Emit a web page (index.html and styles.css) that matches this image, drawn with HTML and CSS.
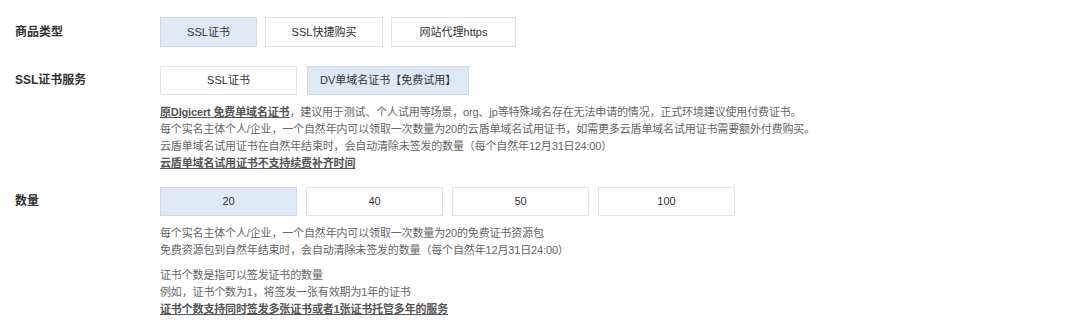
FILE: index.html
```html
<!DOCTYPE html>
<html lang="zh-CN">
<head>
<meta charset="utf-8">
<title>SSL证书</title>
<link rel="stylesheet" href="styles.css">
</head>
<body>
<div class="page">
  <div class="row row-type">
    <div class="label label-30">商品类型</div>
    <div class="content">
      <div class="opts">
        <div class="opt opt-30 w-ssl active">SSL证书</div>
        <div class="opt opt-30 w-quick">SSL快捷购买</div>
        <div class="opt opt-30 w-proxy">网站代理https</div>
      </div>
    </div>
  </div>

  <div class="row row-service">
    <div class="label">SSL证书服务</div>
    <div class="content">
      <div class="opts opts-service">
        <div class="opt opt-wide">SSL证书</div>
        <div class="opt opt-wide active">DV单域名证书【免费试用】</div>
      </div>
      <div class="desc">
        <p><span class="strong">原DIgicert 免费单域名证书</span>，建议用于测试、个人试用等场景，org、jp等特殊域名存在无法申请的情况，正式环境建议使用付费证书。<br>每个实名主体个人/企业，一个自然年内可以领取一次数量为20的云盾单域名试用证书，如需更多云盾单域名试用证书需要额外付费购买。<br>云盾单域名试用证书在自然年结束时，会自动清除未签发的数量（每个自然年12月31日24:00）<br><span class="strong">云盾单域名试用证书不支持续费补齐时间</span></p>
      </div>
    </div>
  </div>

  <div class="row row-count">
    <div class="label">数量</div>
    <div class="content">
      <div class="opts opts-count">
        <div class="opt opt-wide active">20</div>
        <div class="opt opt-wide">40</div>
        <div class="opt opt-wide">50</div>
        <div class="opt opt-wide">100</div>
      </div>
      <div class="desc">
        <p>每个实名主体个人/企业，一个自然年内可以领取一次数量为20的免费证书资源包<br>免费资源包到自然年结束时，会自动清除未签发的数量（每个自然年12月31日24:00）</p>
        <p class="gap">证书个数是指可以签发证书的数量<br>例如，证书个数为1，将签发一张有效期为1年的证书<br><span class="strong">证书个数支持同时签发多张证书或者1张证书托管多年的服务</span></p>
      </div>
    </div>
  </div>
</div>
</body>
</html>
```

FILE: styles.css
```css
* { box-sizing: border-box; }
html, body { margin: 0; padding: 0; background: #ffffff; }
body {
  font-family: "Liberation Sans", "Noto Sans CJK SC", sans-serif;
  color: #333333;
  width: 1080px;
  height: 321px;
  overflow: hidden;
}
.page {
  padding: 17px 0 0 15px;
}
.row {
  display: flex;
  align-items: flex-start;
}
.row-type { margin-bottom: 19px; }
.row-service { margin-bottom: 15px; }
.label {
  width: 145px;
  flex: none;
  font-size: 12px;
  font-weight: bold;
  color: #333333;
  height: 29px;
  line-height: 29px;
}
.label-30 { height: 30px; line-height: 30px; }
.content {
  display: flex;
  flex-direction: column;
}
.opts {
  display: flex;
  gap: 8px;
}
.opts-service { gap: 10px; }
.opts-count { gap: 9px; }
.opt {
  height: 29px;
  line-height: 27px;
  border: 1px solid #e4e4e4;
  background: #ffffff;
  font-size: 11px;
  color: #333333;
  text-align: center;
  white-space: nowrap;
}
.opt-30 { height: 30px; line-height: 28px; }
.w-ssl { width: 97px; }
.w-quick { width: 118px; }
.w-proxy { width: 125px; }
.opt-wide { min-width: 137px; padding: 0 12px; }
.opt.active {
  background: #dfe9f6;
  border-color: #cadbef;
}
.desc {
  margin-top: 9px;
  font-size: 11px;
  line-height: 17px;
  letter-spacing: -0.15px;
  color: #666666;
}
.desc p { margin: 0; }
.desc p.gap { margin-top: 8px; }
.strong {
  font-weight: bold;
  color: #555555;
  text-decoration: underline;
}
```
